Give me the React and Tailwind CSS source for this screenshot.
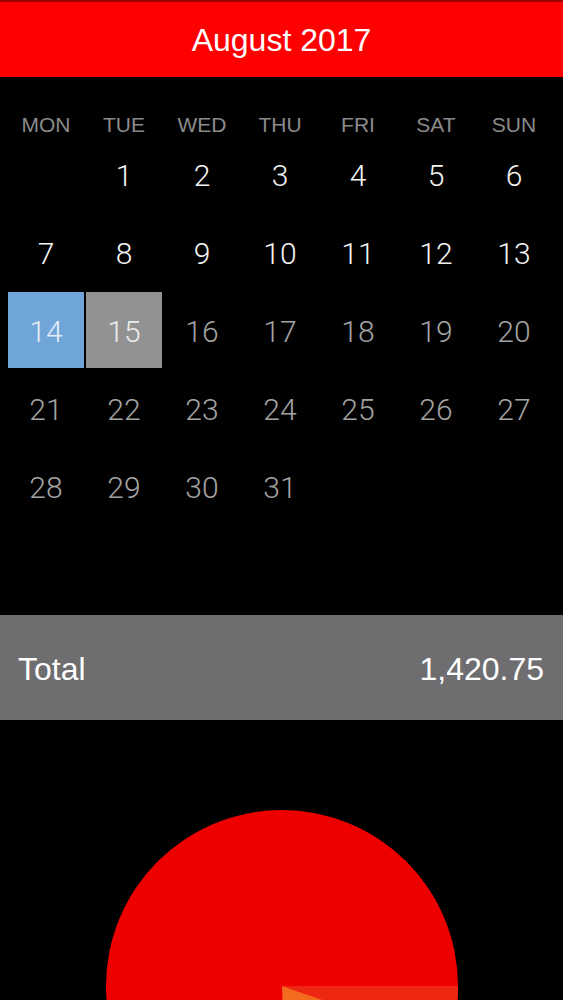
import React from "react";

const WEEKDAYS = ["MON", "TUE", "WED", "THU", "FRI", "SAT", "SUN"];

// Aug 2017 starts on a Tuesday
const buildDays = () => {
  const cells = [null];
  for (let d = 1; d <= 31; d++) cells.push(d);
  while (cells.length < 35) cells.push(null);
  return cells;
};

const TODAY = 15;
const SELECTED = 14;

const DayCell = ({ day }) => {
  if (!day) return <div className="h-[78px]" />;
  const past = day < SELECTED;
  let inner = "text-[#f4f4f4]";
  if (day === SELECTED) inner = "bg-[#6fa5d8] text-[#e4edf6]";
  else if (day === TODAY) inner = "bg-[#929292] text-[#ececec]";
  else if (!past) inner = "text-[#a3a3a3]";
  return (
    <div className="h-[78px] p-px">
      <div className={`h-full w-full flex items-center justify-center pt-[3px] text-[30px] font-light ${inner}`}>
        {day}
      </div>
    </div>
  );
};

const PieChart = () => {
  const cx = 282;
  const cy = 266;
  const r = 176;
  const pt = (deg) => {
    const a = (deg * Math.PI) / 180;
    return [cx + r * Math.cos(a), cy + r * Math.sin(a)];
  };
  const slice = (a0, a1) => {
    const [x0, y0] = pt(a0);
    const [x1, y1] = pt(a1);
    const large = a1 - a0 > 180 ? 1 : 0;
    return `M${cx} ${cy} L${x0} ${y0} A${r} ${r} 0 ${large} 1 ${x1} ${y1} Z`;
  };
  return (
    <svg className="absolute left-0 top-0" width="563" height="280" viewBox="0 0 563 280">
      <circle cx={cx} cy={cy} r={r} fill="#ee0000" />
      <path d={slice(0, 19)} fill="#ee2712" />
      <path d={slice(19, 88)} fill="#f26b1f" />
    </svg>
  );
};

export default function App() {
  const days = buildDays();
  return (
    <div className="w-[563px] h-[1000px] bg-black flex flex-col overflow-hidden font-['Helvetica_Neue','Liberation_Sans',Arial,sans-serif]">
      {/* Month header */}
      <div className="h-[77px] border-t-2 border-[#a00000] bg-[#fe0000] flex items-center justify-center">
        <span className="text-white text-[32px] leading-none">August 2017</span>
      </div>

      {/* Calendar */}
      <div className="pl-[7px] pr-[10px]">
        <div className="grid grid-cols-7 h-[58px] pt-[37px]">
          {WEEKDAYS.map((d) => (
            <div key={d} className="text-center text-[21px] leading-[22px] text-[#8b8b8b]">
              {d}
            </div>
          ))}
        </div>
        <div className="grid grid-cols-7 font-['Roboto',sans-serif]">
          {days.map((d, i) => (
            <DayCell key={i} day={d} />
          ))}
        </div>
      </div>

      {/* Total */}
      <div className="mt-[90px] h-[105px] bg-[#6e6d70] flex items-center justify-between pl-[18px] pr-[19px] pt-[2px] text-white text-[32px]">
        <span>Total</span>
        <span>1,420.75</span>
      </div>

      {/* Chart */}
      <div className="relative flex-1 overflow-hidden">
        <PieChart />
      </div>
    </div>
  );
}
